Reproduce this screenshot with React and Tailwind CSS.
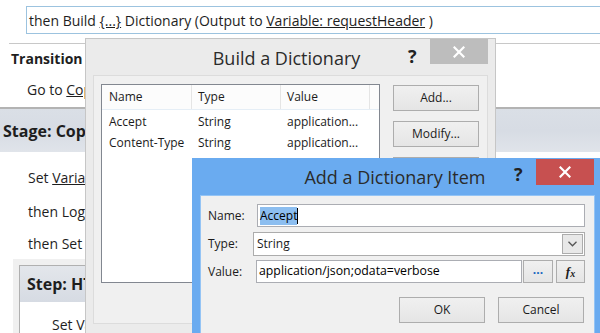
import React from "react";

function CloseX({ className }) {
  return (
    <svg width="12" height="12" viewBox="0 0 12 12" className={className}>
      <path d="M1.5 1.5 L10.5 10.5 M10.5 1.5 L1.5 10.5" stroke="white" strokeWidth="2.2" strokeLinecap="square" />
    </svg>
  );
}

function Btn({ children, className = "" }) {
  return (
    <div className={`flex items-center justify-center border border-[#adadad] bg-gradient-to-b from-[#f0f0f0] to-[#e5e5e5] text-[#1b1b1b] ${className}`}>
      {children}
    </div>
  );
}

export default function App() {
  return (
    <div className="relative w-[600px] h-[333px] overflow-hidden bg-white font-['Open_Sans',sans-serif] text-[14px] text-[#1e1e1e]">
      {/* Background designer */}
      <div className="pt-[6px] pl-[26px]">
        <div className="h-[28px] border border-r-0 border-[#9cc3df] flex items-center pl-[2px] whitespace-nowrap">
          then Build&nbsp;<span className="underline">{"{...}"}</span>&nbsp;Dictionary (Output to&nbsp;
          <span className="underline">Variable: requestHeader</span>&nbsp;)
        </div>
      </div>
      <div className="mt-[9px] ml-[9px] border-t border-[#c8c8c8] h-[64px]">
        <div className="h-[28px] flex items-center pl-[2px] font-bold">Transition</div>
        <div className="h-[34px] flex items-center pl-[18px] whitespace-nowrap">
          Go to&nbsp;<span className="underline">Copy Items</span>
        </div>
      </div>
      <div className="border-t-2 border-[#b3b3b3] h-[45px] bg-gradient-to-b from-[#dadfe6] via-[#d7dce4] to-[#e0e4ea] flex items-center pl-[3px] font-bold text-[16px] whitespace-nowrap">
        Stage: Copy Items
      </div>
      <div className="pt-[8px]">
        <div className="h-[34px] flex items-center pl-[28px] whitespace-nowrap">
          Set&nbsp;<span className="underline">Variable: index</span>
        </div>
        <div className="h-[34px] flex items-center pl-[28px] whitespace-nowrap">then Log to history list</div>
        <div className="h-[31px] flex items-center pl-[28px] whitespace-nowrap">then Set Variable</div>
      </div>
      <div className="ml-[13px] bg-[#f0f0f0] pt-[6px] pl-[6px] h-[80px]">
        <div className="border border-[#b0b0b0] bg-white h-[80px]">
          <div className="h-[36px] bg-gradient-to-b from-[#e3e6eb] to-[#d6dbe3] flex items-center pl-[7px] font-bold text-[16px] whitespace-nowrap">
            Step: HTTP Call
          </div>
          <div className="pt-[12px] pl-[32px] whitespace-nowrap">Set Variable</div>
        </div>
      </div>

      {/* Build a Dictionary dialog */}
      <div className="absolute left-[85px] top-[38px] w-[411px] h-[300px] bg-[#ebebeb] border border-[#c6c6c6] text-[12px] text-[#1b1b1b]">
        <div className="relative h-[36px] flex items-center justify-center">
          <span className="text-[18px] text-[#2b2b2b] pt-[3px] pr-[8px]">Build a Dictionary</span>
          <span className="absolute left-[322px] top-[4px] text-[18px] font-bold text-[#222]">?</span>
          <div className="absolute right-[7px] top-0 w-[58px] h-[25px] bg-[#bdbdbd] flex items-center justify-center">
            <CloseX />
          </div>
        </div>
        <div className="ml-[7px] w-[395px] h-[249px] border border-[#dcdcdc] bg-[#f0f0f0] flex pt-[8px] pl-[7px]">
          <div className="w-[279px] h-[199px] border border-[#828790] bg-white">
            <div className="h-[25px] flex border-b border-[#e5eef6] bg-[#fcfcfc]">
              <div className="w-[90px] border-r border-[#e5e5e5] flex items-center pl-[7px]">Name</div>
              <div className="w-[89px] border-r border-[#e5e5e5] flex items-center pl-[6px]">Type</div>
              <div className="w-[89px] border-r border-[#e5e5e5] flex items-center pl-[6px]">Value</div>
            </div>
            <div className="mt-[1px]">
              {[
                ["Accept", "String", "application..."],
                ["Content-Type", "String", "application..."],
              ].map((r) => (
                <div key={r[0]} className="h-[21px] flex items-center">
                  <div className="w-[90px] pl-[7px] whitespace-nowrap">{r[0]}</div>
                  <div className="w-[89px] pl-[6px]">{r[1]}</div>
                  <div className="w-[89px] pl-[6px] whitespace-nowrap">{r[2]}</div>
                </div>
              ))}
            </div>
          </div>
          <div className="ml-[13px] flex flex-col gap-[10px] pt-[1px]">
            <Btn className="w-[86px] h-[26px]">Add...</Btn>
            <Btn className="w-[86px] h-[26px]">Modify...</Btn>
            <Btn className="w-[86px] h-[26px]">Remove</Btn>
          </div>
        </div>
      </div>

      {/* Add a Dictionary Item dialog */}
      <div className="absolute left-[192px] top-[158px] w-[410px] h-[180px] bg-[#6aabf0] text-[12px] text-[#1b1b1b]">
        <div className="relative h-[37px] flex items-center justify-center">
          <span className="text-[18px] text-[#2b2b2b] pt-[2px] pr-[4px]">Add a Dictionary Item</span>
          <span className="absolute left-[322px] top-[3px] text-[18px] font-bold text-[#222]">?</span>
          <div className="absolute left-[344px] top-[1px] w-[58px] h-[26px] bg-[#c75050] flex items-center justify-center">
            <CloseX />
          </div>
        </div>
        <div className="ml-[8px] w-[395px] h-[150px] border border-[#94c4f5] bg-[#f0f0f0] pl-[7px] pr-[9px]">
          <div className="mt-[8px] h-[23px] flex items-center">
            <div className="w-[49px]">Name:</div>
            <div className="flex-1 h-full border border-[#abadb3] bg-white flex items-center pl-[2px]">
              <span className="bg-[#8cbef0] text-black leading-[18px]">Accept</span>
              <span className="w-px h-[16px] bg-black"></span>
            </div>
          </div>
          <div className="mt-[5px] h-[24px] flex items-center">
            <div className="w-[45px]">Type:</div>
            <div className="flex-1 h-full border border-[#acacac] bg-white flex items-center pl-[3px] pr-[1px]">
              <span className="flex-1">String</span>
              <div className="w-[21px] h-[20px] border border-[#acacac] bg-[#e8e8e8] flex items-center justify-center">
                <svg width="9" height="6" viewBox="0 0 9 6">
                  <path d="M0.5 0.8 L4.5 4.8 L8.5 0.8" fill="none" stroke="#555" strokeWidth="1.3" />
                </svg>
              </div>
            </div>
          </div>
          <div className="mt-[4px] h-[23px] flex items-center">
            <div className="w-[48px]">Value:</div>
            <div className="w-[266px] h-full border border-[#abadb3] bg-white flex items-center pl-[2px] whitespace-nowrap text-black text-[12.3px]">
              application/json;odata=verbose
            </div>
            <Btn className="ml-[1px] w-[30px] h-full">
              <span className="text-[#1766c0] font-bold leading-none pb-[3px]">...</span>
            </Btn>
            <Btn className="ml-[3px] w-[29px] h-full">
              <span className="font-['Liberation_Serif',serif] italic font-bold text-[13px] leading-none">
                f<span className="text-[10px] relative top-[1px]">x</span>
              </span>
            </Btn>
          </div>
          <div className="mt-[14px] h-[26px] flex justify-end gap-[13px] pr-[1px]">
            <Btn className="w-[86px] h-full border-[#3c7fb1]">OK</Btn>
            <Btn className="w-[86px] h-full">Cancel</Btn>
          </div>
        </div>
      </div>
    </div>
  );
}
